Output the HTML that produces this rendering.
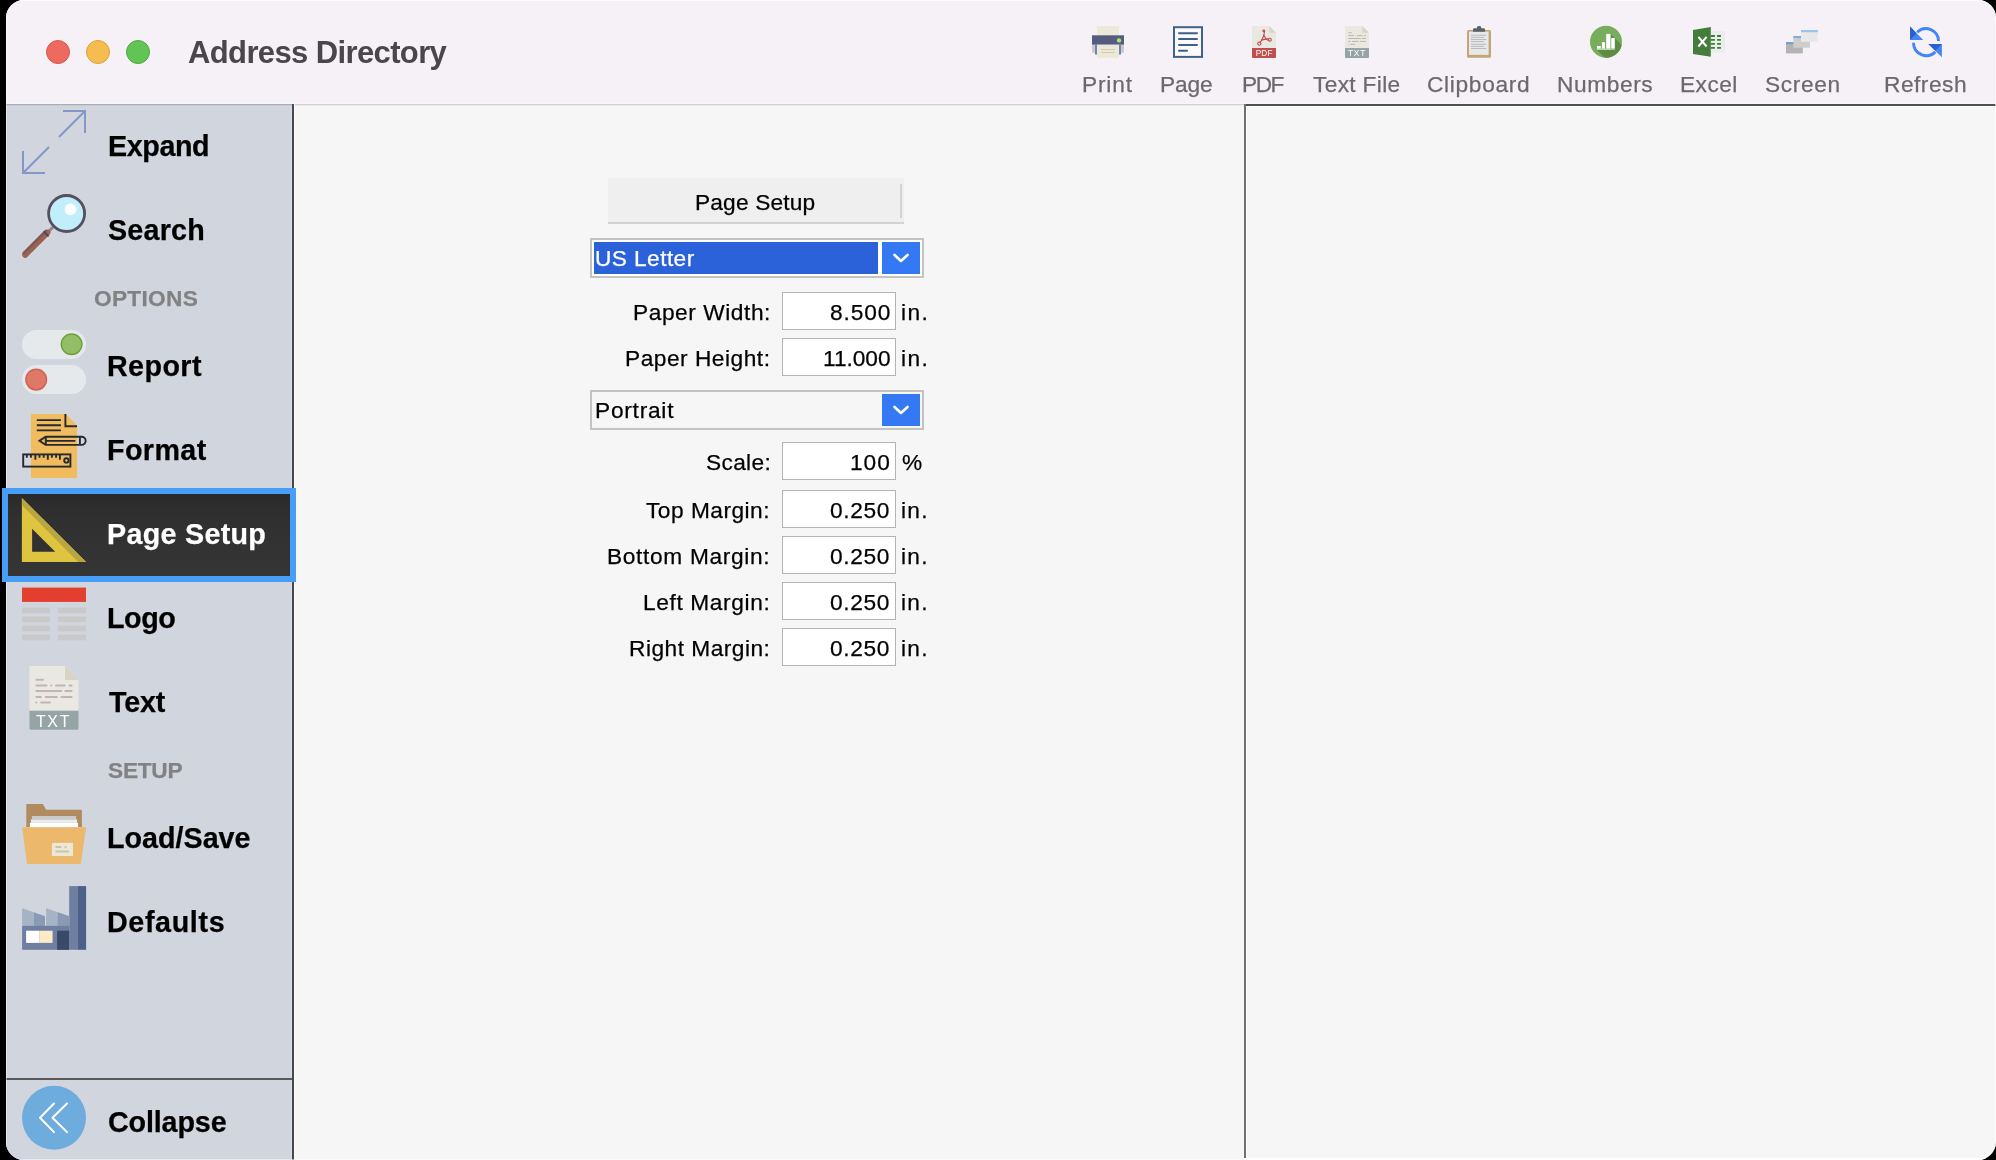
<!DOCTYPE html>
<html><head><meta charset="utf-8">
<style>
*{margin:0;padding:0;box-sizing:border-box}
html,body{width:1996px;height:1160px;overflow:hidden;background:#000}
body{position:relative;font-family:"Liberation Sans",sans-serif}
#win{position:absolute;left:0;top:0;width:1996px;height:1160px;clip-path:inset(0px 0px 0px 6px round 18px);background:#f6f6f6}
.a{position:absolute}
.t{position:absolute;line-height:1;white-space:nowrap;will-change:transform;-webkit-text-stroke:0.25px currentColor}
.in{position:absolute;left:782px;width:114px;height:38px;background:#fff;border:1px solid #b4b4b4}
</style></head><body>
<div id="win">
  <!-- title bar -->
  <div class="a" style="left:0;top:0;width:1996px;height:104px;background:#f6f1f6"></div>
  <div class="a" style="left:0;top:103px;width:1996px;height:1px;background:#faf4fa"></div>
  <div class="a" style="left:295px;top:104px;width:949px;height:1px;background:#d1d1d1"></div>
  <div class="a" style="left:295px;top:105px;width:949px;height:1px;background:#ebebeb"></div>
  <!-- sidebar -->
  <div class="a" style="left:6px;top:105px;width:286px;height:1055px;background:#d0d5de"></div>
  <div class="a" style="left:6px;top:104px;width:286px;height:1px;background:#a7aeb7"></div>
  <div class="a" style="left:6px;top:105px;width:286px;height:1px;background:#c6cbd3"></div>
  <div class="a" style="left:291px;top:106px;width:1px;height:1054px;background:#d8dde6"></div>
  <div class="a" style="left:292px;top:104px;width:2px;height:1056px;background:#484848"></div>
  <div class="a" style="left:294px;top:105px;width:1px;height:1055px;background:#fdfdfd"></div>
  <div class="a" style="left:6px;top:1078px;width:286px;height:2px;background:#5a5a5a"></div>
  <!-- right panel -->
  <div class="a" style="left:1244px;top:104px;width:752px;height:2px;background:#505050"></div>
  <div class="a" style="left:1244px;top:104px;width:2px;height:1054px;background:#707070"></div>
  <div class="a" style="left:1246px;top:106px;width:750px;height:1px;background:#fff"></div>
  <div class="a" style="left:1246px;top:106px;width:1px;height:1054px;background:#fff"></div>
  <div class="a" style="left:1244px;top:1158px;width:752px;height:2px;background:#fff"></div>
  <!-- selected item -->
  
  <div class="a" style="left:8px;top:494px;width:282px;height:82px;background:linear-gradient(#2a2a2a,#303030 30%,#353535)"></div>

  <!-- form -->
  <div class="a" style="left:608px;top:178px;width:296px;height:46px;background:#efefef;border-bottom:2px solid #d2d2d2"></div>
  <div class="a" style="left:900px;top:184px;width:2px;height:34px;background:#d2d2d2"></div>
  <div class="a" style="left:590px;top:238px;width:334px;height:40px;border:2px solid #c3c3c3;background:#fff"></div>
  <div class="a" style="left:594px;top:242px;width:284px;height:32px;background:#2b62da"></div>
  <div class="a" style="left:882px;top:242px;width:38px;height:32px;background:#3479f3"></div>
  <div class="in" style="top:292px"></div>
  <div class="in" style="top:338px"></div>
  <div class="a" style="left:590px;top:390px;width:334px;height:40px;border:2px solid #c3c3c3;background:#f6f6f6"></div>
  <div class="a" style="left:882px;top:394px;width:38px;height:32px;background:#3479f3"></div>
  <div class="in" style="top:442px"></div>
  <div class="in" style="top:490px"></div>
  <div class="in" style="top:536px"></div>
  <div class="in" style="top:582px"></div>
  <div class="in" style="top:628px"></div>

  <div class="a" style="left:6px;top:0;width:1px;height:1160px;background:rgba(255,255,255,0.45)"></div>
  <div class="a" style="left:6px;top:0;width:1990px;height:1px;background:rgba(255,255,255,0.6)"></div>
  <div class="a" style="left:1995px;top:0;width:1px;height:1160px;background:rgba(255,255,255,0.6)"></div>
  <div class="a" style="left:6px;top:1159px;width:1990px;height:1px;background:rgba(255,255,255,0.5)"></div>
<div class="t" style="left:188.1px;top:37.2px;font-size:31px;font-weight:bold;color:#4a474c;-webkit-text-stroke:0;letter-spacing:-0.62px">Address Directory</div>
<div class="t" style="left:1082.4px;top:72.7px;font-size:22.7px;font-weight:normal;color:#6b696c;letter-spacing:0.82px">Print</div>
<div class="t" style="left:1160.4px;top:72.7px;font-size:22.7px;font-weight:normal;color:#6b696c;letter-spacing:-0.13px">Page</div>
<div class="t" style="left:1241.6px;top:72.7px;font-size:22.7px;font-weight:normal;color:#6b696c;letter-spacing:-1.5px">PDF</div>
<div class="t" style="left:1312.7px;top:72.7px;font-size:22.7px;font-weight:normal;color:#6b696c;letter-spacing:0.34px">Text File</div>
<div class="t" style="left:1427.4px;top:72.7px;font-size:22.7px;font-weight:normal;color:#6b696c;letter-spacing:0.69px">Clipboard</div>
<div class="t" style="left:1556.9px;top:72.7px;font-size:22.7px;font-weight:normal;color:#6b696c;letter-spacing:0.6px">Numbers</div>
<div class="t" style="left:1679.8px;top:72.7px;font-size:22.7px;font-weight:normal;color:#6b696c;letter-spacing:0.48px">Excel</div>
<div class="t" style="left:1764.7px;top:72.7px;font-size:22.7px;font-weight:normal;color:#6b696c;letter-spacing:0.66px">Screen</div>
<div class="t" style="left:1883.8px;top:72.7px;font-size:22.7px;font-weight:normal;color:#6b696c;letter-spacing:0.52px">Refresh</div>
<div class="t" style="left:108.0px;top:132.0px;font-size:28.7px;font-weight:bold;color:#000;letter-spacing:-0.4px">Expand</div>
<div class="t" style="left:108.0px;top:216.0px;font-size:28.7px;font-weight:bold;color:#000;letter-spacing:0.2px">Search</div>
<div class="t" style="left:107.0px;top:352.0px;font-size:28.7px;font-weight:bold;color:#000;letter-spacing:0.4px">Report</div>
<div class="t" style="left:107.0px;top:436.0px;font-size:28.7px;font-weight:bold;color:#000;letter-spacing:0.4px">Format</div>
<div class="t" style="left:107.0px;top:520.0px;font-size:28.7px;font-weight:bold;color:#fff;letter-spacing:0.29px">Page Setup</div>
<div class="t" style="left:107.0px;top:604.0px;font-size:28.7px;font-weight:bold;color:#000;letter-spacing:-0.43px">Logo</div>
<div class="t" style="left:109.0px;top:688.0px;font-size:28.7px;font-weight:bold;color:#000;letter-spacing:-0.17px">Text</div>
<div class="t" style="left:107.0px;top:824.0px;font-size:28.7px;font-weight:bold;color:#000;letter-spacing:0.0px">Load/Save</div>
<div class="t" style="left:107.0px;top:908.0px;font-size:28.7px;font-weight:bold;color:#000;letter-spacing:0.63px">Defaults</div>
<div class="t" style="left:108.2px;top:1108.0px;font-size:28.7px;font-weight:bold;color:#000;letter-spacing:-0.14px">Collapse</div>
<div class="t" style="left:94.0px;top:287.0px;font-size:22.7px;font-weight:bold;color:#828282;letter-spacing:0.28px">OPTIONS</div>
<div class="t" style="left:108.0px;top:759.0px;font-size:22.7px;font-weight:bold;color:#828282;letter-spacing:-0.25px">SETUP</div>
<div class="t" style="left:694.9px;top:190.7px;font-size:22.7px;font-weight:normal;color:#000;letter-spacing:0.18px">Page Setup</div>
<div class="t" style="left:594.6px;top:246.6px;font-size:22.7px;font-weight:normal;color:#fff;letter-spacing:0.42px">US Letter</div>
<div class="t" style="left:632.7px;top:300.5px;font-size:22.7px;font-weight:normal;color:#000;letter-spacing:0.57px">Paper Width:</div>
<div class="t" style="left:830.1px;top:300.5px;font-size:22.7px;font-weight:normal;color:#000;letter-spacing:0.92px">8.500</div>
<div class="t" style="left:901.0px;top:300.5px;font-size:22.7px;font-weight:normal;color:#000;letter-spacing:1.4px">in.</div>
<div class="t" style="left:624.8px;top:346.5px;font-size:22.7px;font-weight:normal;color:#000;letter-spacing:0.52px">Paper Height:</div>
<div class="t" style="left:823.0px;top:346.5px;font-size:22.7px;font-weight:normal;color:#000;letter-spacing:-0.04px">11.000</div>
<div class="t" style="left:901.0px;top:346.5px;font-size:22.7px;font-weight:normal;color:#000;letter-spacing:1.4px">in.</div>
<div class="t" style="left:595.0px;top:398.6px;font-size:22.7px;font-weight:normal;color:#000;letter-spacing:0.76px">Portrait</div>
<div class="t" style="left:705.7px;top:450.5px;font-size:22.7px;font-weight:normal;color:#000;letter-spacing:0.34px">Scale:</div>
<div class="t" style="left:849.9px;top:450.5px;font-size:22.7px;font-weight:normal;color:#000;letter-spacing:0.95px">100</div>
<div class="t" style="left:901.8px;top:450.5px;font-size:22.7px;font-weight:normal;color:#000;letter-spacing:0.5px">%</div>
<div class="t" style="left:645.8px;top:498.7px;font-size:22.7px;font-weight:normal;color:#000;letter-spacing:0.5px">Top Margin:</div>
<div class="t" style="left:830.2px;top:498.7px;font-size:22.7px;font-weight:normal;color:#000;letter-spacing:0.65px">0.250</div>
<div class="t" style="left:901.0px;top:498.7px;font-size:22.7px;font-weight:normal;color:#000;letter-spacing:1.3px">in.</div>
<div class="t" style="left:606.9px;top:544.5px;font-size:22.7px;font-weight:normal;color:#000;letter-spacing:0.68px">Bottom Margin:</div>
<div class="t" style="left:830.2px;top:544.5px;font-size:22.7px;font-weight:normal;color:#000;letter-spacing:0.65px">0.250</div>
<div class="t" style="left:901.0px;top:544.5px;font-size:22.7px;font-weight:normal;color:#000;letter-spacing:1.3px">in.</div>
<div class="t" style="left:643.1px;top:590.5px;font-size:22.7px;font-weight:normal;color:#000;letter-spacing:0.63px">Left Margin:</div>
<div class="t" style="left:830.2px;top:590.5px;font-size:22.7px;font-weight:normal;color:#000;letter-spacing:0.65px">0.250</div>
<div class="t" style="left:901.0px;top:590.5px;font-size:22.7px;font-weight:normal;color:#000;letter-spacing:1.3px">in.</div>
<div class="t" style="left:629.0px;top:636.5px;font-size:22.7px;font-weight:normal;color:#000;letter-spacing:0.5px">Right Margin:</div>
<div class="t" style="left:830.2px;top:636.5px;font-size:22.7px;font-weight:normal;color:#000;letter-spacing:0.65px">0.250</div>
<div class="t" style="left:901.0px;top:636.5px;font-size:22.7px;font-weight:normal;color:#000;letter-spacing:1.3px">in.</div>

  <svg class="a" style="left:0;top:0" width="1996" height="1160" viewBox="0 0 1996 1160">
<!-- traffic lights -->
<circle cx="58" cy="52" r="11.5" fill="#ee6a5f" stroke="#d35a4f" stroke-width="1"/>
<circle cx="98" cy="52" r="11.5" fill="#f5bd4f" stroke="#d9a03e" stroke-width="1"/>
<circle cx="138" cy="52" r="11.5" fill="#61c454" stroke="#4fa840" stroke-width="1"/>

<!-- Printer -->
<g>
<rect x="1097" y="26" width="22" height="9.3" fill="#ece9d9"/>
<rect x="1092" y="35.3" width="32" height="9.5" fill="#545d80"/>
<circle cx="1119" cy="40.4" r="2.2" fill="#a8e46a"/>
<rect x="1092" y="44.8" width="32" height="7.9" fill="#c8cac4"/>
<rect x="1095" y="44.8" width="2" height="9.8" fill="#7481bf"/>
<rect x="1119" y="44.8" width="2" height="9.8" fill="#7481bf"/>
<rect x="1097" y="44.8" width="22" height="13.1" fill="#ece9d9"/>
<path d="M1101 49.6H1115M1101 52.5H1115" stroke="#d2caa8" stroke-width="1"/>
</g>

<!-- Page -->
<g>
<rect x="1174" y="27.2" width="28" height="29.7" fill="#fbf9fc" stroke="#3d6189" stroke-width="2"/>
<path d="M1179 33.2H1197M1179 39H1197M1179 44.9H1197M1179 50.7H1187" stroke="#3d6189" stroke-width="2" stroke-linecap="round"/>
</g>

<!-- PDF -->
<g>
<path d="M1252 26H1269.4L1276 32.7V48H1252Z" fill="#e9e8e1"/>
<path d="M1269.4 26V32.7H1276Z" fill="#d7d5c6"/>
<path d="M1252 48H1276V56.9Q1276 57.9 1275 57.9H1253Q1252 57.9 1252 56.9Z" fill="#bf4f4d"/>
<text x="1264.2" y="56.1" font-size="8.2" font-family="Liberation Sans" fill="#fff" text-anchor="middle" letter-spacing="0.2">PDF</text>
<g fill="none" stroke="#c4484a" stroke-width="1.1">
<path d="M1263.8 30.2C1264.6 31.5 1264.3 34 1263.5 36.3C1262.6 39 1261 41.5 1259.8 43"/>
<path d="M1264 35.5L1266.3 39.2C1266.8 39.9 1268.2 40.3 1269.5 40.3"/>
<path d="M1261.3 40.2C1263 39.4 1266 39 1268.2 38.9"/>
<circle cx="1263.8" cy="30.9" r="0.9"/>
<circle cx="1269.8" cy="39.7" r="1.5"/>
<circle cx="1259.3" cy="43.6" r="1.6"/>
</g>
</g>

<!-- TXT toolbar -->
<g>
<path d="M1345 26H1362.3L1369 32.7V48H1345Z" fill="#e9e8e1"/>
<path d="M1362.3 26V32.7H1369Z" fill="#d7d5c6"/>
<path d="M1345 48H1369V56.9Q1369 57.9 1368 57.9H1346Q1345 57.9 1345 56.9Z" fill="#95a4a5"/>
<text x="1357" y="56.2" font-size="8.4" font-family="Liberation Sans" fill="#fff" text-anchor="middle" letter-spacing="0.8">TXT</text>
<path d="M1348.3 32.8H1351.7M1348.3 35.6H1353.7M1355 35.6H1355.6M1357.2 35.6H1362.7M1364 35.6H1365.8M1348.3 38.5H1360.8M1362 38.5H1365.8M1348.3 41.4H1350.7M1352 41.4H1358.6M1359.8 41.4H1365.8M1348.3 44.3H1348.9M1350.3 44.3H1355" stroke="#c1b3b2" stroke-width="1"/>
</g>

<!-- Clipboard -->
<g>
<rect x="1467" y="30" width="24" height="27.8" rx="1.5" fill="#c4a574"/>
<rect x="1469" y="31.6" width="19.6" height="23.3" fill="#e8e8e8"/>
<path d="M1473 31.8V29.5Q1473 28.3 1474.2 28.3H1477V27.2Q1477 26 1479 26Q1481.2 26 1481.2 27.2V28.3H1483.8Q1485 28.3 1485 29.5V31.8Z" fill="#5a616b"/>
<path d="M1471 35.2H1486.3M1471 37.4H1484M1471 39.5H1486.3M1471 41.6H1484M1471 44.3H1486.3M1471 46.4H1484M1471 48.5H1486.3" stroke="#b3b7ba" stroke-width="0.9"/>
</g>

<!-- Numbers -->
<g>
<clipPath id="numclip"><circle cx="1606" cy="41.8" r="16"/></clipPath>
<circle cx="1606" cy="41.8" r="16" fill="#77ad5c"/>
<g clip-path="url(#numclip)">
<path d="M1597 49.9L1647 99.9L1660.5 83.9L1610.5 33.9V49.9Z" fill="#5e8c45"/>
</g>
<rect x="1597" y="46" width="3.8" height="2.6" fill="#fff"/>
<rect x="1601.9" y="42.2" width="3.1" height="6.4" fill="#fff"/>
<rect x="1606.2" y="33.9" width="4.3" height="14.7" fill="#fff"/>
<rect x="1611.2" y="38" width="3.6" height="10.6" fill="#fff"/>
<rect x="1597" y="48.6" width="17.8" height="1.3" fill="#fff" opacity="0.55"/>
</g>

<!-- Excel -->
<g>
<rect x="1710.8" y="31" width="14.3" height="21.7" fill="#e9edec"/>
<path d="M1693 30.1L1710.8 27V56.8L1693 53.9Z" fill="#437c3b"/>
<path d="M1710.8 36H1714.9M1717.1 36H1720.9M1710.8 39.9H1714.9M1717.1 39.9H1720.9M1710.8 43.9H1714.9M1717.1 43.9H1720.9M1710.8 47.9H1714.9M1717.1 47.9H1720.9" stroke="#3f7d34" stroke-width="1.8"/>
<path d="M1698.4 36.8L1706.6 46.5M1706.6 36.8L1698.4 46.5" stroke="#fff" stroke-width="2"/>
</g>

<!-- Screen -->
<g>
<rect x="1786" y="42.2" width="16.8" height="11.2" fill="#b3b3b3"/>
<rect x="1786" y="42.2" width="16.8" height="1.9" fill="#6b9fd0"/>
<rect x="1793.3" y="36.1" width="16.7" height="11.6" fill="#cdcdcd"/>
<rect x="1793.3" y="36.1" width="16.7" height="1.9" fill="#79acdf"/>
<rect x="1801" y="30.1" width="16.9" height="11.7" fill="#e8e8e8"/>
<rect x="1801" y="30.1" width="16.9" height="2.1" fill="#94c2f2"/>
</g>

<!-- Refresh -->
<g>
<path d="M1917.2 32.3A12.5 12.5 0 0 1 1938.5 41.1" fill="none" stroke="#4285f4" stroke-width="2.9"/>
<path d="M1913.5 42.8A12.8 12.8 0 0 0 1935.35 51.85" fill="none" stroke="#4285f4" stroke-width="2.9"/>
<path d="M1910.1 26.5V39.9H1923.2Z" fill="#4285f4"/>
<path d="M1910.1 26.5L1916.6 33.2L1910.1 39.9Z" fill="#2d5fcc"/>
<path d="M1928.4 44.1H1941.9V57.2Z" fill="#4285f4"/>
<path d="M1928.4 44.1H1941.9L1935.2 50.8Z" fill="#2d5fcc"/>
</g>

<!-- Expand -->
<path d="M63 111H85V133M85 111L59 137M23 151V173H45M23 173L49 147" stroke="#8596c9" stroke-width="2" fill="none"/>

<!-- Search -->
<g>
<path d="M47.5 232.6L53 227.1" stroke="#8e8a93" stroke-width="3"/>
<circle cx="66.6" cy="213.5" r="18" fill="#c0eefb" stroke="#574e5e" stroke-width="2.8"/>
<circle cx="70.6" cy="209.4" r="5.9" fill="#fff"/>
<path d="M25.2 254.8L47.4 232.6" stroke="#9c6253" stroke-width="6" stroke-linecap="round"/>
<path d="M23.6 253.2L45.8 231" stroke="#7e5a55" stroke-width="2.6" stroke-linecap="round"/>
<path d="M43.6 231.4L48.6 236.4" stroke="#4e4658" stroke-width="1.8"/>
</g>

<!-- Report toggles -->
<g>
<rect x="22" y="330" width="64" height="29" rx="14.5" fill="#e6e9ec"/>
<circle cx="71.6" cy="344.2" r="10.3" fill="#93bd66" stroke="#6fa03e" stroke-width="1.5"/>
<rect x="22" y="365" width="64" height="29" rx="14.5" fill="#e6e9ec"/>
<circle cx="36.2" cy="379.6" r="10.3" fill="#e07868" stroke="#cf6454" stroke-width="1.5"/>
</g>

<!-- Format -->
<g>
<path d="M31 414H66L77 425.2V478H31Z" fill="#f0bc5e"/>
<g fill="none" stroke="#26292f" stroke-width="1.9">
<path d="M65.4 414V426.3H77"/>
<path d="M36.8 420.1H60.9M36.8 425.2H60.9M36.8 430.4H60.9"/>
<path d="M39.4 440.85L45.6 436.8H81.6A4.05 4.05 0 0 1 81.6 444.9H45.6Z"/>
<path d="M45.8 437V444.6M46 440.85H75.4M79.9 436.8V444.9"/>
<rect x="23.2" y="454.4" width="47.2" height="12.2"/>
<path d="M26.8 455V457.7M30.9 455V457.7M35.4 455V459.7M39.5 455V457.7M43.7 455V457.7M47.8 455V459.7M51.9 455V457.7M56.1 455V457.7M59.9 455V459.7"/>
<circle cx="66.4" cy="460.4" r="2.2"/>
</g>
</g>

<!-- Page Setup set square -->
<g>
<path d="M21.9 498V561.9H86.1Z" fill="#dfc43f"/>
<path d="M21.9 498L86.1 561.9H78.1L21.9 505.2Z" fill="#b8a641"/>
<path d="M32.1 528.7V551.8H55.2Z" fill="#313131"/>
</g>

<!-- Logo -->
<g>
<rect x="22" y="587.6" width="64" height="14.3" fill="#e23f2f"/>
<g fill="#c9c9c9">
<rect x="22" y="607.6" width="28" height="5.6"/><rect x="57.8" y="607.6" width="28.2" height="5.6"/>
<rect x="22" y="616.6" width="28" height="5.6"/><rect x="57.8" y="616.6" width="28.2" height="5.6"/>
<rect x="22" y="625.5" width="28" height="5.7"/><rect x="57.8" y="625.5" width="28.2" height="5.7"/>
<rect x="22" y="634.5" width="28" height="5.8"/><rect x="57.8" y="634.5" width="28.2" height="5.8"/>
</g>
</g>

<!-- Text (TXT) -->
<g>
<path d="M29.5 667Q29.5 666 30.5 666H65L78.5 680V710.7H29.5Z" fill="#eae9e1"/>
<path d="M65 666V680H78.5Z" fill="#d7d4c4"/>
<path d="M29.5 710.7H78.5V728.3Q78.5 729.8 77 729.8H31Q29.5 729.8 29.5 728.3Z" fill="#95a4a5"/>
<text x="53.5" y="726.8" font-size="16" font-family="Liberation Sans" fill="#fff" text-anchor="middle" letter-spacing="1.6">TXT</text>
<path d="M36.4 679.7H43M36.4 685.4H46.4M51.1 685.4H51.2M56 685.4H64.7M69.5 685.4H71.6M36.4 691H61.3M65.3 691H71.6M36.4 696.9H40.9M45.7 696.9H56.8M61.6 696.9H71.6M36.2 702.6H36.3M41.2 702.6H49.9" stroke="#c2b4b3" stroke-width="2" stroke-linecap="round"/>
</g>

<!-- Load/Save folder -->
<g>
<path d="M26.3 805.1Q26.3 804.1 27.3 804.1H42.8L46.1 809.8H80.9Q81.9 809.8 81.9 810.8V827H26.3Z" fill="#b08b60"/>
<rect x="31.9" y="816" width="44.2" height="3.4" fill="#c8cacb"/>
<rect x="30.9" y="819.4" width="46.2" height="3.5" fill="#e8ecee"/>
<rect x="29.9" y="822.9" width="48.2" height="4.3" fill="#fff"/>
<path d="M22.1 827.2H86.1L80.8 863.9H27.1Z" fill="#ecb86c"/>
<rect x="51.9" y="842.9" width="21.1" height="13.1" fill="#ebe8d8"/>
<path d="M56.2 847H60.6M65.3 847H65.8M56.2 851.5H68.2" stroke="#c9c5a8" stroke-width="2" stroke-linecap="round"/>
</g>

<!-- Defaults factory -->
<g>
<rect x="69.2" y="886.1" width="8.8" height="63.7" fill="#6e7fa1"/>
<rect x="78" y="886.1" width="8.1" height="63.7" fill="#4d6089"/>
<path d="M22.1 908.3L45 916.2V926H22.1Z" fill="#a6b2c6"/>
<path d="M34 912.4L45 916.2V926H34Z" fill="#8b9ab4"/>
<path d="M46.1 908.3L69.2 916.2V926H46.1Z" fill="#a6b2c6"/>
<path d="M57.8 912.3L69.2 916.2V926H57.8Z" fill="#8b9ab4"/>
<rect x="22.1" y="925.9" width="47.1" height="23.9" fill="#6e7fa1"/>
<rect x="26.1" y="930.7" width="13.1" height="12.2" fill="#fff"/>
<rect x="39.2" y="930.7" width="13.4" height="12.2" fill="#fcebc6"/>
<rect x="57.1" y="930.7" width="12.1" height="19.1" fill="#394a68"/>
</g>

<!-- Collapse -->
<g>
<circle cx="54" cy="1117.8" r="32" fill="#6eacdd"/>
<path d="M54 1103.5L40 1117.8L54 1132.1M67 1103.5L52.5 1117.8L67 1132.1" fill="none" stroke="#fff" stroke-width="2" stroke-linecap="round" stroke-linejoin="round"/>
</g>

<!-- Combo chevrons -->
<path d="M894.5 255L901 261L907.5 255" fill="none" stroke="#fff" stroke-width="2.6" stroke-linecap="round" stroke-linejoin="round"/>
<path d="M894.5 407L901 413L907.5 407" fill="none" stroke="#fff" stroke-width="2.6" stroke-linecap="round" stroke-linejoin="round"/>

  </svg>
</div>
<div class="a" style="left:2px;top:488px;width:294px;height:94px;border:6px solid #479ef6"></div>
</body></html>
